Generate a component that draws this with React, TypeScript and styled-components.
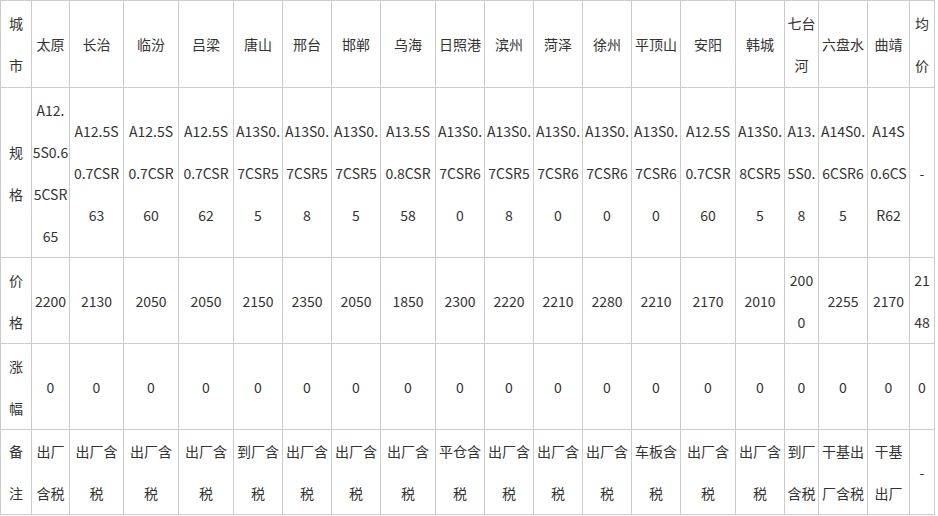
import styled, { createGlobalStyle } from 'styled-components';

const GlobalStyle = createGlobalStyle`
  html, body {
    margin: 0;
    padding: 0;
    background: #fff;
  }
`;

const Table = styled.table`
  border-collapse: collapse;
  table-layout: fixed;
  width: 935px;
  font-family: "Microsoft YaHei", "Noto Sans CJK SC", sans-serif;
  font-size: 14px;
  color: #333;
`;

const Row = styled.tr<{ $h: number }>`
  height: ${(p) => p.$h}px;
`;

const Cell = styled.td`
  border: 1px solid #ccc;
  padding: 0;
  line-height: 42px;
  text-align: center;
  vertical-align: middle;
  white-space: pre-line;
  overflow: hidden;
`;

const colWidths = [31, 38, 54, 55, 55, 49, 49, 49, 55, 49, 49, 49, 49, 49, 55, 49, 34, 49, 42, 25];

const rows: { h: number; cells: string[] }[] = [
  {
    h: 87,
    cells: ['城\n市', '太原', '长治', '临汾', '吕梁', '唐山', '邢台', '邯郸', '乌海', '日照港', '滨州', '菏泽', '徐州', '平顶山', '安阳', '韩城', '七台\n河', '六盘水', '曲靖', '均\n价'],
  },
  {
    h: 170,
    cells: [
      '规\n格',
      'A12.\n5S0.6\n5CSR\n65',
      'A12.5S\n0.7CSR\n63',
      'A12.5S\n0.7CSR\n60',
      'A12.5S\n0.7CSR\n62',
      'A13S0.\n7CSR5\n5',
      'A13S0.\n7CSR5\n8',
      'A13S0.\n7CSR5\n5',
      'A13.5S\n0.8CSR\n58',
      'A13S0.\n7CSR6\n0',
      'A13S0.\n7CSR5\n8',
      'A13S0.\n7CSR6\n0',
      'A13S0.\n7CSR6\n0',
      'A13S0.\n7CSR6\n0',
      'A12.5S\n0.7CSR\n60',
      'A13S0.\n8CSR5\n5',
      'A13.\n5S0.\n8',
      'A14S0.\n6CSR6\n5',
      'A14S\n0.6CS\nR62',
      '-',
    ],
  },
  {
    h: 86,
    cells: ['价\n格', '2200', '2130', '2050', '2050', '2150', '2350', '2050', '1850', '2300', '2220', '2210', '2280', '2210', '2170', '2010', '200\n0', '2255', '2170', '21\n48'],
  },
  {
    h: 86,
    cells: ['涨\n幅', '0', '0', '0', '0', '0', '0', '0', '0', '0', '0', '0', '0', '0', '0', '0', '0', '0', '0', '0'],
  },
  {
    h: 85,
    cells: [
      '备\n注',
      '出厂\n含税',
      '出厂含\n税',
      '出厂含\n税',
      '出厂含\n税',
      '到厂含\n税',
      '出厂含\n税',
      '出厂含\n税',
      '出厂含\n税',
      '平仓含\n税',
      '出厂含\n税',
      '出厂含\n税',
      '出厂含\n税',
      '车板含\n税',
      '出厂含\n税',
      '出厂含\n税',
      '到厂\n含税',
      '干基出\n厂含税',
      '干基\n出厂',
      '-',
    ],
  },
];

const App = () => {
  return (
    <>
      <GlobalStyle />
      <Table>
        <colgroup>
          {colWidths.map((w, i) => (
            <col key={i} style={{ width: w }} />
          ))}
        </colgroup>
        <tbody>
          {rows.map((row, r) => (
            <Row key={r} $h={row.h}>
              {row.cells.map((c, i) => (
                <Cell key={i}>{c}</Cell>
              ))}
            </Row>
          ))}
        </tbody>
      </Table>
    </>
  );
};

export default App;
